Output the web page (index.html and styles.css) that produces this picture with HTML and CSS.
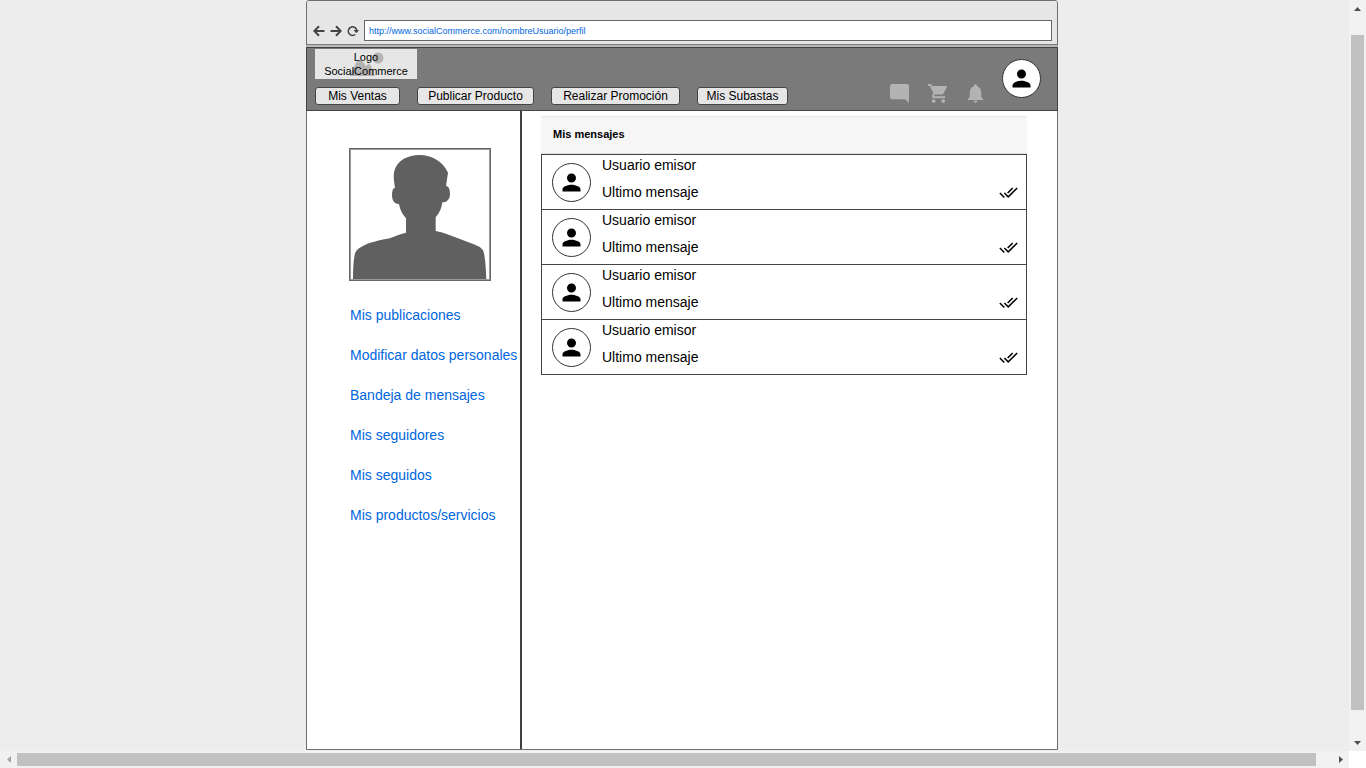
FILE: index.html
```html
<!DOCTYPE html>
<html lang="es">
<head>
<meta charset="utf-8">
<title>SocialCommerce - Mis mensajes</title>
<link rel="stylesheet" href="styles.css">
</head>
<body>
<svg class="defs" aria-hidden="true">
  <symbol id="person" viewBox="0 0 24 24"><path d="M12 12c2.21 0 4-1.79 4-4s-1.79-4-4-4-4 1.79-4 4 1.79 4 4 4zm0 2c-2.67 0-8 1.34-8 4v2h16v-2c0-2.66-5.33-4-8-4z"/></symbol>
  <symbol id="done-all" viewBox="0 0 24 24"><path d="M18 7l-1.41-1.41-6.34 6.34 1.41 1.41L18 7zm4.24-1.41L11.66 16.17 7.48 12l-1.41 1.41L11.66 19l12-12-1.42-1.41zM.41 13.41L6 19l1.41-1.41L1.83 12 .41 13.41z"/></symbol>
</svg>
<div class="viewport">
  <div class="canvas">
    <div class="browser">
      <div class="chrome">
        <button class="tool" type="button" aria-label="Atrás"><svg viewBox="0 0 12 12"><path d="M11.500 6H1.500M6 1.300L1.300 6L6 10.700"/></svg></button>
        <button class="tool" type="button" aria-label="Adelante"><svg viewBox="0 0 12 12"><path d="M.5 6H10.500M6 1.300L10.700 6L6 10.700"/></svg></button>
        <button class="tool reload" type="button" aria-label="Recargar"><svg viewBox="0 0 12 12"><path d="M8.300 9.500A4.300 4.300 0 1 1 9.700 5"/><path class="solid" d="M6.500 5H12L9.400 8.300z"/></svg></button>
        <input class="url" type="text" aria-label="Dirección" value="http://www.socialCommerce.com/nombreUsuario/perfil">
      </div>
      <header class="header">
        <div class="brand">
          <div class="logo">
            <svg class="logo-art" viewBox="0 0 34 24" aria-hidden="true"><circle cx="28" cy="6" r="5.500"/><path d="M0 24L6 11Q9 5 13 10L16 14Q19 10 21 14L25 24z"/></svg>
            <span class="logo-text">Logo<br>SocialCommerce</span>
          </div>
          <nav class="menu">
            <button type="button">Mis Ventas</button>
            <button type="button">Publicar Producto</button>
            <button type="button">Realizar Promoción</button>
            <button type="button">Mis Subastas</button>
          </nav>
        </div>
        <div class="actions">
          <button type="button" aria-label="Mensajes"><svg viewBox="2 2 20 20"><path d="M21.990 4c0-1.100-.89-2-1.990-2H4c-1.100 0-2 .9-2 2v12c0 1.100.9 2 2 2h14l4 4-.01-18z"/></svg></button>
          <button type="button" aria-label="Carrito"><svg viewBox="1 2 20 20"><path d="M7 18c-1.100 0-1.990.9-1.990 2S5.900 22 7 22s2-.9 2-2-.9-2-2-2zM1 2v2h2l3.600 7.590-1.350 2.450c-.16.28-.25.61-.25.96 0 1.100.9 2 2 2h12v-2H7.420c-.14 0-.25-.11-.25-.25l.03-.12.9-1.630h7.450c.75 0 1.410-.41 1.750-1.030l3.580-6.490c.08-.14.12-.31.12-.48 0-.55-.45-1-1-1H5.210l-.94-2H1zm16 16c-1.100 0-1.990.9-1.990 2s.89 2 1.990 2 2-.9 2-2-.9-2-2-2z"/></svg></button>
          <button type="button" aria-label="Notificaciones"><svg viewBox="2 2.250 20 20"><path d="M12 22c1.100 0 2-.9 2-2h-4c0 1.100.89 2 2 2zm6-6v-5c0-3.070-1.640-5.640-4.500-6.320V4c0-.83-.67-1.500-1.500-1.500s-1.500.67-1.500 1.500v.68C7.630 5.360 6 7.920 6 11v5l-2 2v1h16v-1l-2-2z"/></svg></button>
        </div>
        <button class="avatar" type="button" aria-label="Mi perfil"><svg><use href="#person"/></svg></button>
      </header>
      <div class="content">
        <aside class="sidebar">
          <svg class="portrait" viewBox="45 27 420 393" role="img" aria-label="Foto de perfil"><path d="M180 143C176 120 175 105 178 92C187 60 220 45 253 45C292 45 324 65 339 98L333 138C342 138 345 150 345 164C344 178 335 187 322 187C320 205 313 220 302 232V273C325 277 345 286 367 294L420 314C438 321 446 328 448 344C452 370 453 395 454 420H54C54 390 55 365 59 345C62 328 75 322 91 314C112 305 142 299 167 294C182 287 198 282 213 278V235C201 222 195 208 192 192C179 193 171 182 171 166C171 153 173 145 180 143z"/></svg>
          <nav class="links">
            <a href="#">Mis publicaciones</a>
            <a href="#">Modificar datos personales</a>
            <a href="#">Bandeja de mensajes</a>
            <a href="#">Mis seguidores</a>
            <a href="#">Mis seguidos</a>
            <a href="#">Mis productos/servicios</a>
          </nav>
        </aside>
        <main class="main">
          <h1 class="title">Mis mensajes</h1>
          <ul class="messages">
            <li><span class="avatar"><svg><use href="#person"/></svg></span><div class="text"><p>Usuario emisor</p><p>Ultimo mensaje</p></div><svg class="check"><use href="#done-all"/></svg></li>
            <li><span class="avatar"><svg><use href="#person"/></svg></span><div class="text"><p>Usuario emisor</p><p>Ultimo mensaje</p></div><svg class="check"><use href="#done-all"/></svg></li>
            <li><span class="avatar"><svg><use href="#person"/></svg></span><div class="text"><p>Usuario emisor</p><p>Ultimo mensaje</p></div><svg class="check"><use href="#done-all"/></svg></li>
            <li><span class="avatar"><svg><use href="#person"/></svg></span><div class="text"><p>Usuario emisor</p><p>Ultimo mensaje</p></div><svg class="check"><use href="#done-all"/></svg></li>
          </ul>
        </main>
      </div>
    </div>
  </div>
  <div class="bar vertical">
    <button type="button" aria-label="Subir"><svg viewBox="0 0 7 4"><path d="M0 4L3.500 0L7 4z"/></svg></button>
    <div class="track"><div class="thumb"></div></div>
    <button type="button" aria-label="Bajar"><svg viewBox="0 0 7 4"><path d="M0 0L3.500 4L7 0z"/></svg></button>
  </div>
  <div class="bar horizontal">
    <button class="off" type="button" aria-label="Izquierda"><svg viewBox="0 0 4 7"><path d="M4 0L0 3.500L4 7z"/></svg></button>
    <div class="track"><div class="thumb"></div></div>
    <button type="button" aria-label="Derecha"><svg viewBox="0 0 4 7"><path d="M0 0L4 3.500L0 7z"/></svg></button>
  </div>
</div>
</body>
</html>
```

FILE: styles.css
```css
* { box-sizing: border-box; }
body { margin: 0; background: #fff; color: #000; font-family: "Liberation Sans", Arial, sans-serif; font-size: 14px; }
button { margin: 0; padding: 0; border: 0; background: none; font: inherit; color: inherit; }
p, h1, ul { margin: 0; padding: 0; }
svg { display: block; }
.defs { display: none; }

.viewport { display: grid; grid-template-columns: minmax(0, 1fr) 17px; grid-template-rows: minmax(0, 1fr) 17px; height: 100vh; }
.canvas { display: flex; justify-content: center; padding: 0 0 1px 15px; background: #ededed; overflow: hidden; }

.browser { display: flex; flex-direction: column; width: 100%; max-width: 752px; border: 1px solid #6e6e6e; border-radius: 3px 3px 0 0; background: #fff; }
.chrome { display: flex; align-items: center; gap: 5px; padding: 19px 5px 3px 6px; background: #e6e6e6; border-bottom: 1px solid #7d7d7d; border-radius: 3px 3px 0 0; }
.tool { width: 12px; height: 12px; }
.tool svg { width: 12px; height: 12px; fill: none; stroke: #444; stroke-width: 2; }
.reload svg { stroke-width: 1.5; }
.tool .solid { fill: #444; stroke: none; }
.url { flex: 1; min-width: 0; height: 21px; margin: 0; padding: 0 4px; border: 1px solid #666; background: #fff; color: #0066dd; font: 9px "Liberation Sans", Arial, sans-serif; }

.header { display: flex; align-items: flex-start; margin: 2px -1px 0; padding: 1px 16px 5px 8px; border: 1px solid #444; background: #7a7a7a; box-shadow: 0 -2px #b8b8b8; }
.brand { display: flex; flex-direction: column; align-items: flex-start; gap: 8px; flex: 1; }
.logo { position: relative; width: 102px; padding: 1px 0; background: #e6e6e6; font-size: 11px; line-height: 14px; text-align: center; }
.logo-art { position: absolute; left: 35px; top: 3px; width: 34px; height: 24px; fill: #b3b3b3; }
.logo-text { position: relative; }
.menu { display: grid; grid-template-columns: 85px 117px 129px 91px; gap: 17px; }
.menu button { height: 18px; border: 1px solid #444; border-radius: 3px; background: #e6e6e6; font-size: 12px; line-height: 16px; text-align: center; white-space: nowrap; }
.actions { display: flex; gap: 19px; padding: 35px 17px 0 0; }
.actions svg { width: 19px; height: 19px; fill: #b3b3b3; }

.avatar { display: grid; place-items: center; flex: none; width: 39px; height: 39px; border: 1px solid #333; border-radius: 50%; background: #fff; }
.avatar svg { width: 27px; height: 27px; }
.header > .avatar { margin-top: 10px; }

.content { display: flex; flex: 1; }
.sidebar { width: 215px; padding: 37px 0 0 42px; border-right: 2px solid #404040; }
.portrait { width: 142px; height: 133px; border: 1px solid #666; outline: 1px solid #999; outline-offset: -2px; fill: #606060; }
.links { display: flex; flex-direction: column; gap: 20px; padding: 24px 0 0 1px; line-height: 20px; }
.links a { color: #0066dd; text-decoration: none; white-space: nowrap; }

.main { flex: 1; padding: 5px 30px 0 19px; }
.title { padding: 0 12px 2px; background: #f6f6f6; border-top: 1px solid #e8e8e8; border-bottom: 1px solid #e0e0e0; font-size: 11px; line-height: 34px; }
.messages { list-style: none; border-top: 1px solid #444; }
.messages li { display: flex; align-items: center; height: 55px; padding: 0 8px 0 10px; border: 1px solid #444; border-top: 0; }
.messages .text { flex: 1; align-self: flex-start; display: flex; flex-direction: column; gap: 7px; padding-left: 11px; line-height: 20px; }
.check { align-self: flex-end; width: 19px; height: 19px; margin-bottom: 7px; }

.bar { display: flex; background: #f1f1f1; }
.vertical { flex-direction: column; }
.bar button { display: grid; place-items: center; width: 17px; height: 17px; flex: none; fill: #505050; }
.vertical svg { width: 7px; height: 4px; }
.horizontal svg { width: 4px; height: 7px; }
.bar .off { fill: #a3a3a3; }
.track { display: flex; flex: 1; }
.thumb { background: #c1c1c1; }
.vertical .track { flex-direction: column; padding: 18px 2px 24px; }
.vertical .thumb { flex: 1; }
.horizontal .track { padding: 2px 16px 2px 0; }
.horizontal .thumb { flex: 1; }
```
